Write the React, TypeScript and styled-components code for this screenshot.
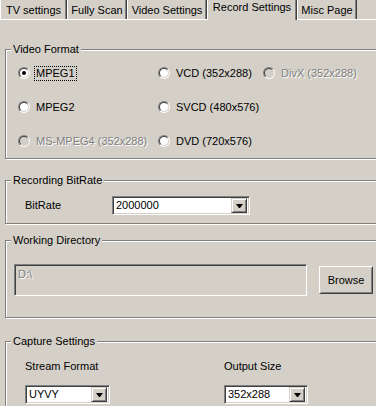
import React from 'react';
import styled, { createGlobalStyle } from 'styled-components';

const face = '#d4d0c8';
const shadow = '#808080';
const darkShadow = '#404040';
const hilight = '#ffffff';

const GlobalStyle = createGlobalStyle`
  html, body {
    margin: 0;
    padding: 0;
    overflow: hidden;
    background: ${face};
  }
  body {
    font-family: "Liberation Sans", Arial, sans-serif;
    font-size: 11px;
    color: #000;
  }
`;

const Window = styled.div`
  width: 392px;
  height: 406px;
  background: ${face};
`;

const TabStrip = styled.div`
  display: flex;
  align-items: flex-start;
  height: 20px;
  box-shadow: inset 0 -1px 0 ${hilight};
`;

const Tab = styled.div<{ $active?: boolean; $width: number }>`
  box-sizing: border-box;
  width: ${p => p.$width}px;
  height: ${p => (p.$active ? 20 : 19)}px;
  padding-top: ${p => (p.$active ? 1 : 4)}px;
  line-height: 13px;
  text-align: center;
  white-space: nowrap;
  background: ${face};
  border-left: 1px solid ${hilight};
  border-right: 1px solid ${darkShadow};
  box-shadow: inset -1px 0 0 ${shadow};
`;

const Group = styled.fieldset<{ $top: number }>`
  margin: ${p => p.$top}px 5px 0;
  padding: 0;
  min-width: 0;
  border: 1px solid ${shadow};
  box-shadow: inset 1px 1px 0 ${hilight}, 1px 1px 0 ${hilight};
`;

const Legend = styled.legend`
  margin-left: 5px;
  padding: 0 2px;
  line-height: 13px;
  background: ${face};
`;

const RadioGrid = styled.div`
  display: grid;
  grid-template-columns: 140px 105px auto;
  grid-auto-rows: 20px;
  row-gap: 14px;
  padding: 7px 0 7px 12px;
`;

const Option = styled.div<{ $disabled?: boolean }>`
  display: flex;
  align-items: center;
  gap: 5px;
  white-space: nowrap;
  color: ${p => (p.$disabled ? shadow : '#000')};
  text-shadow: ${p => (p.$disabled ? `1px 1px 0 ${hilight}` : 'none')};
`;

const RadioOuter = styled.span`
  box-sizing: border-box;
  flex: none;
  width: 12px;
  height: 12px;
  border-radius: 50%;
  border: 1px solid;
  border-color: ${shadow} ${hilight} ${hilight} ${shadow};
  display: flex;
  align-items: center;
  justify-content: center;
`;

const RadioInner = styled.span<{ $disabled?: boolean }>`
  box-sizing: border-box;
  width: 10px;
  height: 10px;
  border-radius: 50%;
  border: 1px solid;
  border-color: ${darkShadow} ${face} ${face} ${darkShadow};
  background: ${p => (p.$disabled ? face : hilight)};
  display: flex;
  align-items: center;
  justify-content: center;
`;

const Dot = styled.span`
  width: 4px;
  height: 4px;
  border-radius: 50%;
  background: #000;
`;

const Caption = styled.span<{ $focused?: boolean }>`
  line-height: 13px;
  padding: 0 1px;
  outline: ${p => (p.$focused ? '1px dotted #000' : 'none')};
`;

const FieldRow = styled.div`
  display: flex;
  align-items: center;
  padding: 9px 0 8px 19px;
`;

const FieldLabel = styled.span<{ $width?: number }>`
  width: ${p => (p.$width ? `${p.$width}px` : 'auto')};
  line-height: 13px;
`;

const Combo = styled.div<{ $width: number }>`
  box-sizing: border-box;
  width: ${p => p.$width}px;
  height: 19px;
  display: flex;
  align-items: center;
  padding: 2px;
  background: ${hilight};
  border: 1px solid;
  border-color: ${shadow} ${hilight} ${hilight} ${shadow};
  box-shadow: inset 1px 1px 0 ${darkShadow}, inset -1px -1px 0 ${face};
`;

const ComboValue = styled.span`
  flex: 1;
  padding-left: 1px;
  line-height: 15px;
`;

const DropButton = styled.span`
  box-sizing: border-box;
  width: 16px;
  height: 15px;
  display: flex;
  align-items: center;
  justify-content: center;
  background: ${face};
  border: 1px solid;
  border-color: ${face} ${darkShadow} ${darkShadow} ${face};
  box-shadow: inset 1px 1px 0 ${hilight}, inset -1px -1px 0 ${shadow};
`;

const Arrow = styled.span`
  width: 1px;
  height: 0;
  border-left: 3px solid transparent;
  border-right: 3px solid transparent;
  border-top: 4px solid #000;
`;

const DirRow = styled.div`
  display: flex;
  align-items: center;
  gap: 12px;
  padding: 17px 0 21px 8px;
`;

const PathEdit = styled.div`
  box-sizing: border-box;
  width: 293px;
  height: 32px;
  padding: 1px 1px;
  background: ${face};
  color: ${shadow};
  text-shadow: 1px 1px 0 ${hilight};
  line-height: 13px;
  border: 1px solid;
  border-color: ${shadow} ${hilight} ${hilight} ${shadow};
  box-shadow: inset 1px 1px 0 ${darkShadow}, inset -1px -1px 0 ${face};
  padding-left: 3px;
  padding-top: 3px;
`;

const Button = styled.button`
  box-sizing: border-box;
  width: 54px;
  height: 28px;
  padding: 0;
  font: inherit;
  color: #000;
  background: ${face};
  border: 1px solid;
  border-color: ${hilight} ${darkShadow} ${darkShadow} ${hilight};
  box-shadow: inset 1px 1px 0 ${face}, inset -1px -1px 0 ${shadow};
`;

const CaptureGrid = styled.div`
  display: grid;
  grid-template-columns: 199px auto;
  padding: 12px 0 12px 19px;
`;

const CaptureField = styled.div`
  display: flex;
  flex-direction: column;
  gap: 12px;
`;

const tabs = [
  { label: 'TV settings', width: 67 },
  { label: 'Fully Scan', width: 60 },
  { label: 'Video Settings', width: 80 },
  { label: 'Record Settings', width: 90, active: true },
  { label: 'Misc Page', width: 60 },
];

type Fmt = { label: string; checked?: boolean; disabled?: boolean } | null;

const formats: Fmt[] = [
  { label: 'MPEG1', checked: true },
  { label: 'VCD (352x288)' },
  { label: 'DivX (352x288)', disabled: true },
  { label: 'MPEG2' },
  { label: 'SVCD (480x576)' },
  null,
  { label: 'MS-MPEG4 (352x288)', disabled: true },
  { label: 'DVD (720x576)' },
];

const Radio: React.FC<{ checked?: boolean; disabled?: boolean }> = ({ checked, disabled }) => (
  <RadioOuter>
    <RadioInner $disabled={disabled}>{checked && <Dot />}</RadioInner>
  </RadioOuter>
);

const ComboBox: React.FC<{ value: string; width: number }> = ({ value, width }) => (
  <Combo $width={width}>
    <ComboValue>{value}</ComboValue>
    <DropButton>
      <Arrow />
    </DropButton>
  </Combo>
);

const App: React.FC = () => (
  <Window>
    <GlobalStyle />
    <TabStrip>
      {tabs.map(t => (
        <Tab key={t.label} $width={t.width} $active={t.active}>
          {t.label}
        </Tab>
      ))}
    </TabStrip>

    <Group $top={23}>
      <Legend>Video Format</Legend>
      <RadioGrid>
        {formats.map((f, i) =>
          f ? (
            <Option key={f.label} $disabled={f.disabled}>
              <Radio checked={f.checked} disabled={f.disabled} />
              <Caption $focused={f.checked}>{f.label}</Caption>
            </Option>
          ) : (
            <div key={`empty-${i}`} />
          )
        )}
      </RadioGrid>
    </Group>

    <Group $top={15}>
      <Legend>Recording BitRate</Legend>
      <FieldRow>
        <FieldLabel $width={87}>BitRate</FieldLabel>
        <ComboBox value="2000000" width={138} />
      </FieldRow>
    </Group>

    <Group $top={10}>
      <Legend>Working Directory</Legend>
      <DirRow>
        <PathEdit>D:\</PathEdit>
        <Button>Browse</Button>
      </DirRow>
    </Group>

    <Group $top={17}>
      <Legend>Capture Settings</Legend>
      <CaptureGrid>
        <CaptureField>
          <FieldLabel>Stream Format</FieldLabel>
          <ComboBox value="UYVY" width={85} />
        </CaptureField>
        <CaptureField>
          <FieldLabel>Output Size</FieldLabel>
          <ComboBox value="352x288" width={84} />
        </CaptureField>
      </CaptureGrid>
    </Group>
  </Window>
);

export default App;
